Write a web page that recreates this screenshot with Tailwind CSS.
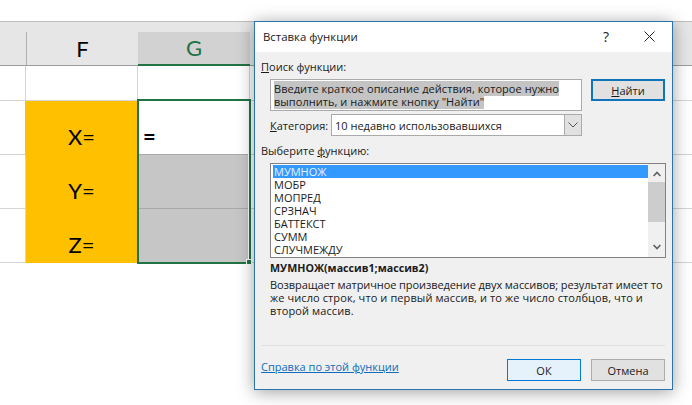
<!DOCTYPE html>
<html lang="ru">
<head>
    <meta charset="UTF-8">
    <meta name="viewport" content="width=device-width, initial-scale=1.0">
    <title>Вставка функции</title>
    <script src="https://cdn.jsdelivr.net/npm/@tailwindcss/browser@4"></script>
</head>
<body class="relative w-[692px] h-[405px] overflow-hidden bg-white">
    <!-- Sheet -->
    <div id="sheet" class="grid grid-cols-[26px_112px_112px_112px_112px_112px_106px] grid-rows-[22px_44px_35px_54px_54px_54px_35px_35px_35px_35px_2px] font-['Lato',sans-serif] text-[22px] leading-[24px] text-black">
        <div class="col-span-7 border-b border-[#bdbdbd]"></div>

        <!-- Header row -->
        <div class="bg-[#e6e6e6] border-b border-[#9c9c9c]"></div>
        <div class="bg-[#e6e6e6] border-b border-[#9c9c9c] pt-[10px]">
            <div class="h-full border-l border-[#b0b0b0] flex items-center justify-center">F</div>
        </div>
        <div class="bg-[#e6e6e6] pt-[10px]">
            <div class="h-full bg-[#d2d2d2] border-b-2 border-[#217346] text-[#217346] flex items-center justify-center">G</div>
        </div>
        <div class="col-span-4 bg-[#e6e6e6] border-b border-[#9c9c9c]"></div>

        <!-- Row above the block -->
        <div class="border-r border-b border-[#d4d4d4]"></div>
        <div class="border-r border-b border-[#d4d4d4]"></div>
        <div class="border-r border-b border-[#d4d4d4]"></div>
        <div class="border-r border-b border-[#d4d4d4]"></div>
        <div class="border-r border-b border-[#d4d4d4]"></div>
        <div class="border-r border-b border-[#d4d4d4]"></div>
        <div class="border-b border-[#d4d4d4]"></div>

        <!-- Block X Y Z -->
        <div class="border-r border-b border-[#d4d4d4]"></div>
        <div class="row-span-3 -ml-px bg-[#ffc000] flex flex-col">
            <div class="h-[54px] pb-[6px] flex items-end justify-center">X=</div>
            <div class="h-[54px] pb-[6px] flex items-end justify-center">Y=</div>
            <div class="h-[54px] pb-[6px] flex items-end justify-center">Z=</div>
        </div>
        <div class="row-span-3 relative flex flex-col">
            <div class="h-[53px] pl-[5px] pb-[5px] flex items-end font-bold">=</div>
            <div class="h-[55px] ml-px mr-[2px] bg-[#c6c6c6] border-t border-b border-[#a8a8a8]"></div>
            <div class="h-[53px] ml-px mr-[2px] bg-[#c6c6c6]"></div>
            <div class="absolute -left-px -top-[2px] -right-px -bottom-px border-2 border-[#217346]"></div>
            <div class="absolute -right-[2px] -bottom-[2px] w-[6px] h-[6px] bg-[#217346] border border-white"></div>
        </div>
        <div class="border-r border-b border-[#d4d4d4]"></div>
        <div class="border-r border-b border-[#d4d4d4]"></div>
        <div class="border-r border-b border-[#d4d4d4]"></div>
        <div class="border-b border-[#d4d4d4]"></div>
        <div class="border-r border-b border-[#d4d4d4]"></div>
        <div class="border-r border-b border-[#d4d4d4]"></div>
        <div class="border-r border-b border-[#d4d4d4]"></div>
        <div class="border-r border-b border-[#d4d4d4]"></div>
        <div class="border-b border-[#d4d4d4]"></div>
        <div class="border-r border-b border-[#d4d4d4]"></div>
        <div class="border-r border-b border-[#d4d4d4]"></div>
        <div class="border-r border-b border-[#d4d4d4]"></div>
        <div class="border-r border-b border-[#d4d4d4]"></div>
        <div class="border-b border-[#d4d4d4]"></div>
    </div>

    <!-- Dialog -->
    <div class="absolute left-[254px] top-[21px] w-[419px] h-[369px] bg-[#f0f0f0] border border-[#2d72ad] shadow-[0_2px_16px_rgba(0,0,0,0.38)] font-['Open_Sans',sans-serif] text-[11px] leading-[13px] text-[#1a1a1a]">
        <!-- Title bar -->
        <div class="h-[30px] bg-white flex items-center pl-[8px] pb-[2px]">
            <span class="text-[11.4px]">Вставка функции</span>
            <span class="ml-auto text-[14px]">?</span>
            <svg class="ml-[35px] mr-[17px]" width="11" height="11" viewBox="0 0 11 11" fill="none" stroke="#222" stroke-width="1"><path d="M.5.5l10 10M10.5.5l-10 10"/></svg>
        </div>

        <div class="pl-[7px] pr-[7px]">
            <div class="mt-[8px] h-[13px] -ml-px"><span class="underline">П</span>оиск функции:</div>

            <!-- Search row -->
            <div class="mt-[6px] flex items-start pl-[8px]">
                <div class="w-[312px]">
                    <div class="h-[32px] bg-white border border-[#aaaaaa] pl-[3px] pt-[2px] tracking-[0.05px] whitespace-nowrap">
                        <span class="bg-[#c4c4c4]">Введите краткое описание действия, которое нужно<br>выполнить, и нажмите кнопку "Найти"</span>
                    </div>
                    <div class="mt-[3px] flex items-center">
                        <span class="w-[61px]"><span class="underline">К</span>атегория:</span>
                        <div class="w-[251px] h-[22px] bg-white border border-[#aaaaaa] flex items-center pl-[3px]">
                            <span>10 недавно использовавшихся</span>
                            <div class="ml-auto w-[17px] h-full bg-[#e1e1e1] border-l border-[#aaaaaa] flex items-center justify-center">
                                <svg width="10" height="6" viewBox="0 0 10 6" fill="none" stroke="#555" stroke-width="1"><path d="M.5.5L5 5 9.5.5"/></svg>
                            </div>
                        </div>
                    </div>
                </div>
                <button class="ml-[9px] w-[74px] h-[22px] bg-[#e1e1e1] border-2 border-[#0f74ba]"><span class="underline">Н</span>айти</button>
            </div>

            <div class="mt-[8px] h-[13px] -ml-px">Выберите <span class="underline">ф</span>ункцию:</div>

            <!-- Function list -->
            <div class="mt-[6px] ml-[8px] w-[396px] h-[95px] bg-white border border-[#828282] flex pt-px pl-[2px]">
                <div class="flex-1 flex flex-col">
                    <div class="h-[13px] bg-[#3399ff] text-[#e8f2ff] pl-px">МУМНОЖ</div>
                    <div class="h-[13px] pl-px">МОБР</div>
                    <div class="h-[13px] pl-px">МОПРЕД</div>
                    <div class="h-[13px] pl-px">СРЗНАЧ</div>
                    <div class="h-[13px] pl-px">БАТТЕКСТ</div>
                    <div class="h-[13px] pl-px">СУММ</div>
                    <div class="h-[13px] pl-px">СЛУЧМЕЖДУ</div>
                </div>
                <div class="w-[17px] -mt-px flex flex-col items-center bg-[#f0f0f0]">
                    <svg class="mt-[7px] mb-[5px]" width="8" height="6" viewBox="0 0 8 6" fill="none" stroke="#606060" stroke-width="1.6"><path d="M.6 5L4 1.4 7.4 5"/></svg>
                    <div class="w-full h-[40px] bg-[#cdcdcd]"></div>
                    <svg class="mt-auto mb-[7px]" width="8" height="6" viewBox="0 0 8 6" fill="none" stroke="#606060" stroke-width="1.6"><path d="M.6 1L4 4.6 7.4 1"/></svg>
                </div>
            </div>

            <!-- Description -->
            <div class="mt-[4px] ml-[8px]">
                <div class="font-bold text-[10.7px] h-[13px]">МУМНОЖ(массив1;массив2)</div>
                <p class="mt-[3px] whitespace-nowrap tracking-[0.1px]"><span class="tracking-[-0.08px]">Возвращает матричное произведение двух массивов; результат имеет то</span><br>же число строк, что и первый массив, и то же число столбцов, что и<br>второй массив.</p>
            </div>

            <div class="mt-[28px] h-px bg-[#dfdfdf]"></div>

            <!-- Footer -->
            <div class="mt-[13px] flex items-start">
                <a class="mt-[1px] -ml-px text-[#0f6cbd] underline">Справка по этой функции</a>
                <button class="ml-auto w-[74px] h-[22px] bg-[#e5f1fb] border border-[#0078d7]">ОК</button>
                <button class="ml-[10px] w-[74px] h-[22px] bg-[#e1e1e1] border border-[#adadad]">Отмена</button>
            </div>
        </div>
    </div>
</body>
</html>
